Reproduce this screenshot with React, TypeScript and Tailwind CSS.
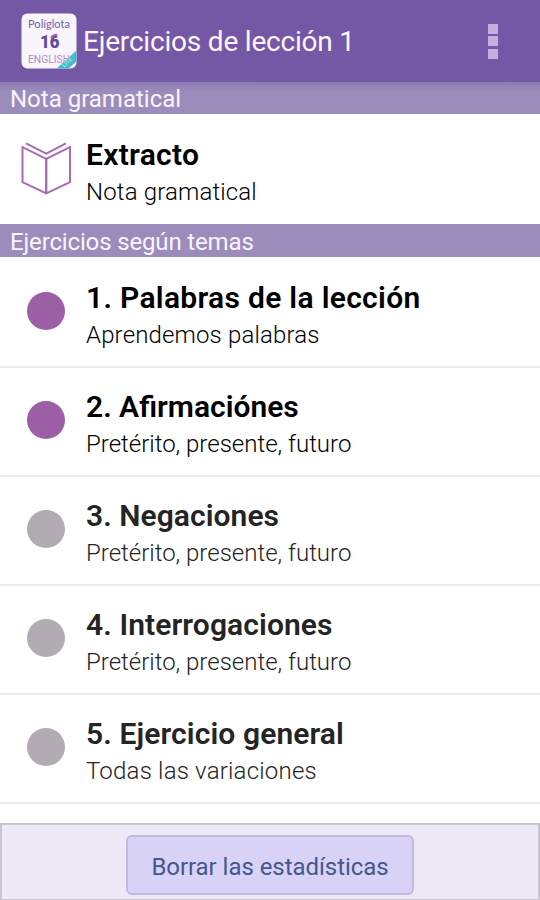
interface Exercise {
  id: number;
  title: string;
  subtitle: string;
  started: boolean;
  unlocked: boolean;
  titleSpacing: string;
  subtitleSpacing: string;
}

const exercises: Exercise[] = [
  { id: 1, title: "1. Palabras de la lección", subtitle: "Aprendemos palabras", started: true, unlocked: true, titleSpacing: "tracking-[0.3px]", subtitleSpacing: "tracking-[0.15px]" },
  { id: 2, title: "2. Afirmaciónes", subtitle: "Pretérito, presente, futuro", started: true, unlocked: true, titleSpacing: "tracking-normal", subtitleSpacing: "tracking-normal" },
  { id: 3, title: "3. Negaciones", subtitle: "Pretérito, presente, futuro", started: false, unlocked: false, titleSpacing: "tracking-[0.05px]", subtitleSpacing: "tracking-normal" },
  { id: 4, title: "4. Interrogaciones", subtitle: "Pretérito, presente, futuro", started: false, unlocked: false, titleSpacing: "tracking-[0.1px]", subtitleSpacing: "tracking-normal" },
  { id: 5, title: "5. Ejercicio general", subtitle: "Todas las variaciones", started: false, unlocked: false, titleSpacing: "tracking-[0.1px]", subtitleSpacing: "tracking-[0.2px]" },
];

function AppIcon() {
  return (
    <svg width="56" height="56" viewBox="0 0 56 56" className="shrink-0" fontFamily="Roboto, sans-serif">
      <defs>
        <clipPath id="icon-clip">
          <rect x="0.5" y="0.5" width="55" height="55" rx="6" />
        </clipPath>
        <linearGradient id="lang" x1="0" x2="1">
          <stop offset="0" stopColor="#a48cc8" />
          <stop offset="1" stopColor="#c982bd" />
        </linearGradient>
      </defs>
      <g clipPath="url(#icon-clip)">
        <rect width="56" height="56" fill="#f8f6fb" />
        <text x="7" y="15" fontSize="12" fontFamily="Lato, sans-serif" textLength="42" lengthAdjust="spacingAndGlyphs" fill="#7460a4">Políglota</text>
        <text x="19" y="35" fontSize="18" fontWeight="900" textLength="19.5" lengthAdjust="spacingAndGlyphs" fill="#604a9c">16</text>
        <path d="M30 25c1-2 3-3 6-3.200" fill="none" stroke="#b75fb0" strokeWidth="2" />
        <text x="7" y="49.5" fontSize="11.5" textLength="42" lengthAdjust="spacingAndGlyphs" fill="url(#lang)">ENGLISH</text>
        <path d="M56 37v11L47 56H35z" fill="#45b9c7" />
        <text x="43" y="54.5" fontSize="6" transform="rotate(-42 43 54.5)" fill="#d4f1f3">LITE</text>
      </g>
    </svg>
  );
}

function BookIcon() {
  return (
    <svg width="52" height="54" viewBox="0 0 52 54" fill="none" stroke="#ab6bb3" strokeWidth="2" className="shrink-0">
      <path d="M1.5 5.2 25.2 16.8 49 5.2v35L25.2 51.5 1.5 40.2z" />
      <path d="M25.2 16.8v34.7" strokeWidth="2.4" />
      <path d="M5 1.3 25.2 11.7 45 1.3" />
    </svg>
  );
}

function SectionHeader({ title, className }: { title: string; className: string }) {
  return (
    <h2 className={`shrink-0 whitespace-nowrap bg-[#9b8cbc] pl-2.5 text-[24px] font-normal text-[#fbf4ff] ${className}`}>
      {title}
    </h2>
  );
}

export default function App() {
  return (
    <div className="flex h-[900px] w-[540px] flex-col overflow-hidden bg-white font-[Roboto,sans-serif] text-black">
      {/* Action bar */}
      <header className="flex h-[82px] shrink-0 items-center bg-[#7458a5] pl-[21px] pr-[42px]">
        <AppIcon />
        <h1 className="ml-[6px] mt-[2px] whitespace-nowrap text-[28px] leading-8 tracking-[-0.2px] text-[#fff6ff]">Ejercicios de lección 1</h1>
        <button className="ml-auto flex flex-col gap-[2.5px]" aria-label="Más opciones">
          <span className="size-[10px] bg-[#c3b0df]" />
          <span className="size-[10px] bg-[#c3b0df]" />
          <span className="size-[10px] bg-[#c3b0df]" />
        </button>
      </header>

      <SectionHeader title="Nota gramatical" className="h-8 bg-linear-to-b from-[#8c7ab1] from-0% to-[#9b8cbc] to-30% leading-[35px]" />

      <div className="flex h-[110px] shrink-0 pl-[21px]">
        <div className="mt-[28px]">
          <BookIcon />
        </div>
        <div className="ml-[13px] whitespace-nowrap pt-[23px]">
          <h3 className="text-[30px] font-semibold leading-9 tracking-[0.3px]">Extracto</h3>
          <p className="text-[24px] font-light leading-[38px] tracking-[0.15px]">Nota gramatical</p>
        </div>
      </div>

      <SectionHeader title="Ejercicios según temas" className="h-[33px] leading-[37px] tracking-[-0.15px]" />

      {/* Exercise list */}
      <ul className="flex-1 overflow-hidden pt-[2px]">
        {exercises.map((exercise) => (
          <li key={exercise.id} className="flex h-[109px] border-b-2 border-[#ebebeb] pl-[27px]">
            <span className={`mt-[33px] size-[38px] shrink-0 rounded-full ${exercise.started ? "bg-[#9c5ea5]" : "bg-[#b2abb3]"}`} />
            <div className={`ml-[21px] whitespace-nowrap pt-[21px] ${exercise.unlocked ? "text-black" : "text-[#242424]"}`}>
              <h3 className={`text-[30px] font-semibold leading-9 ${exercise.titleSpacing}`}>{exercise.title}</h3>
              <p className={`text-[24px] font-light leading-[38px] ${exercise.subtitleSpacing}`}>{exercise.subtitle}</p>
            </div>
          </li>
        ))}
      </ul>

      <footer className="flex h-[77px] shrink-0 justify-center border-2 border-b border-[#c9c5d3] bg-[#eee9f7] pt-[10px]">
        <button className="h-[60px] w-[288px] whitespace-nowrap rounded-md border-2 border-[#c3b9dc] bg-[#d8d3f6] pt-[3px] text-[24px] tracking-[-0.05px] text-[#45578d]">
          Borrar las estadísticas
        </button>
      </footer>
    </div>
  );
}
